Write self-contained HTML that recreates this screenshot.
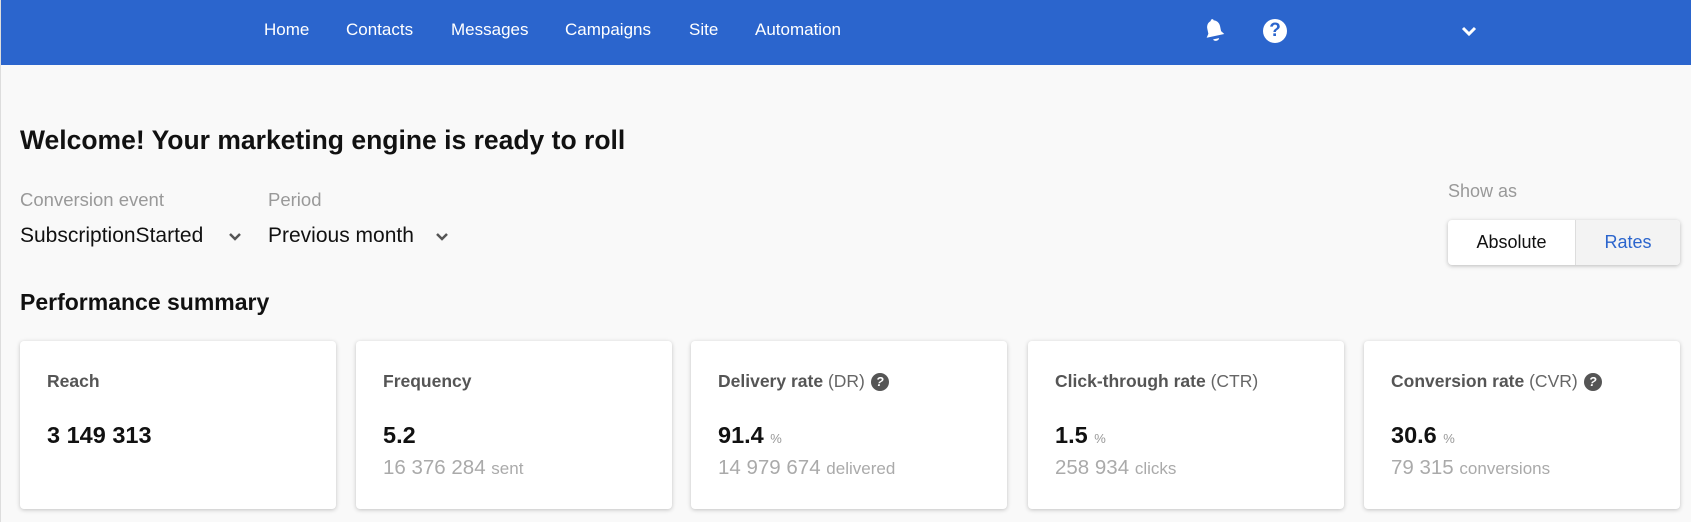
<!DOCTYPE html>
<html><head><style>
*{margin:0;padding:0;box-sizing:border-box}
body{width:1691px;height:522px;overflow:hidden;background:#f9f9f9;font-family:"Liberation Sans",sans-serif;position:relative;border-left:1px solid #ddd}
.nav{position:absolute;left:0;top:0;width:1691px;height:65px;background:#2b65cd}
.nav a{position:absolute;top:20px;color:#fff;font-size:17px;text-decoration:none}
.abs{position:absolute;white-space:nowrap}
.lbl{color:#999;font-size:18.5px}
.sel{color:#111;font-size:21px}
.card{position:absolute;top:341px;width:316px;height:168px;background:#fff;border-radius:4px;box-shadow:0 1px 4px rgba(0,0,0,.22)}
.card .t{position:absolute;left:27px;top:30px;font-size:17.5px;color:#555;font-weight:bold}
.card .t span{font-weight:normal;color:#666}
.card .v{position:absolute;left:27px;top:81px;font-size:23.5px;font-weight:bold;color:#111}
.card .v small{font-size:13px;color:#999;font-weight:normal}
.card .s{position:absolute;left:27px;top:115px;font-size:20.5px;color:#aaa}
.card .s small{font-size:17px}
.q{display:inline-block;width:18px;height:18px;border-radius:50%;background:#555;color:#fff;font-size:13px;text-align:center;line-height:18px;font-weight:bold;vertical-align:1px;margin-left:6px}
</style></head><body>
<div class="nav">
<a style="left:263px">Home</a><a style="left:345px">Contacts</a><a style="left:450px">Messages</a><a style="left:564px">Campaigns</a><a style="left:688px">Site</a><a style="left:754px">Automation</a>
<svg class="abs" style="left:1201px;top:17px" width="24" height="26" viewBox="0 0 24 26"><path d="M12 2c1 0 1.5.7 1.5 1.5 3 .8 5 3.4 5 7v5l2.5 3.5H3l2.5-3.5v-5c0-3.6 2-6.2 5-7C10.5 2.7 11 2 12 2z" fill="#fff" transform="rotate(-12 12 12)"/><path d="M9 22a3 2 0 0 0 6 0z" fill="#fff" transform="rotate(-12 12 12)"/></svg>
<div class="abs" style="left:1262px;top:19px;width:24px;height:24px;border-radius:50%;background:#fff;color:#2b65cd;font-weight:bold;font-size:19px;text-align:center;line-height:24px">?</div>
<svg class="abs" style="left:1460px;top:25px" width="16" height="12" viewBox="0 0 16 12"><path d="M2 3l6 6 6-6" stroke="#fff" stroke-width="3" fill="none"/></svg>
</div>
<div class="abs" style="left:19px;top:125px;font-size:26.5px;font-weight:bold;color:#111">Welcome! Your marketing engine is ready to roll</div>
<div class="abs lbl" style="left:19px;top:189px">Conversion event</div>
<div class="abs lbl" style="left:267px;top:189px">Period</div>
<div class="abs sel" style="left:19px;top:224px">SubscriptionStarted</div>
<div class="abs sel" style="left:267px;top:224px">Previous month</div>
<svg class="abs" style="left:227px;top:232px" width="14" height="10" viewBox="0 0 14 10"><path d="M2 2l5 5 5-5" stroke="#555" stroke-width="2.5" fill="none"/></svg>
<svg class="abs" style="left:434px;top:232px" width="14" height="10" viewBox="0 0 14 10"><path d="M2 2l5 5 5-5" stroke="#555" stroke-width="2.5" fill="none"/></svg>
<div class="abs lbl" style="left:1447px;top:181px;font-size:18px">Show as</div>
<div class="abs" style="left:1447px;top:220px;width:232px;height:45px;border-radius:4px;box-shadow:0 1px 4px rgba(0,0,0,.25);background:#fff;overflow:hidden">
<div class="abs" style="left:0;top:0;width:127px;height:45px;line-height:45px;text-align:center;font-size:18px;color:#111">Absolute</div>
<div class="abs" style="left:127px;top:0;width:105px;height:45px;line-height:45px;text-align:center;font-size:18px;color:#2b65cd;background:#f3f3f3;border-left:1px solid #ddd">Rates</div>
</div>
<div class="abs" style="left:19px;top:289px;font-size:23px;font-weight:bold;color:#111">Performance summary</div>
<div class="card" style="left:19px"><div class="t">Reach</div><div class="v">3 149 313</div></div>
<div class="card" style="left:355px"><div class="t">Frequency</div><div class="v">5.2</div><div class="s">16 376 284 <small>sent</small></div></div>
<div class="card" style="left:690px"><div class="t">Delivery rate <span>(DR)</span><i class="q">?</i></div><div class="v">91.4 <small>%</small></div><div class="s">14 979 674 <small>delivered</small></div></div>
<div class="card" style="left:1027px"><div class="t">Click-through rate <span>(CTR)</span></div><div class="v">1.5 <small>%</small></div><div class="s">258 934 <small>clicks</small></div></div>
<div class="card" style="left:1363px"><div class="t">Conversion rate <span>(CVR)</span><i class="q">?</i></div><div class="v">30.6 <small>%</small></div><div class="s">79 315 <small>conversions</small></div></div>
</body></html>
